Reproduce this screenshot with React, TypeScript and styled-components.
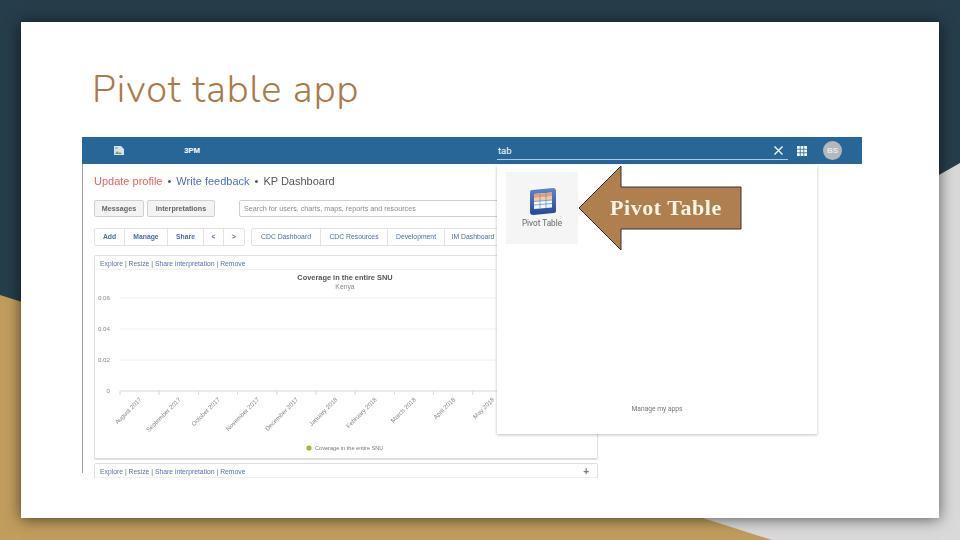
import React from "react";
import styled, { createGlobalStyle } from "styled-components";

const GlobalStyle = createGlobalStyle`
  html, body {
    margin: 0;
    padding: 0;
    background: #263d4b;
  }
  * {
    box-sizing: border-box;
  }
`;

const Slide = styled.div`
  position: relative;
  width: 960px;
  height: 540px;
  overflow: hidden;
  padding: 22px 21px;
  background: #263d4b;
`;

const Backdrop = styled.svg`
  position: absolute;
  inset: 0;
`;

const Card = styled.main`
  position: relative;
  height: 496px;
  background: #fff;
  box-shadow: 0 1px 14px rgba(0, 0, 0, 0.6);
`;

const Title = styled.h1`
  margin: 0;
  height: 115px;
  padding: 40px 0 0 71px;
  font-family: "Nunito", "Lato", sans-serif;
  font-weight: 300;
  font-size: 38px;
  line-height: 56px;
  letter-spacing: 1px;
  color: #ab7a4b;
`;

const Shot = styled.section`
  position: relative;
  width: 780px;
  height: 341px;
  margin-left: 61px;
`;

const ShotInner = styled.div`
  height: 100%;
  overflow: hidden;
  font-family: "Liberation Sans", Arial, sans-serif;
  filter: blur(0.45px);
`;

const Header = styled.header`
  display: flex;
  align-items: center;
  height: 27px;
  padding: 0 19px 0 32px;
  background: #276696;
  color: #fff;
`;

const AppName = styled.span`
  margin-left: 60px;
  width: 313px;
  font-size: 7.8px;
  font-weight: 700;
`;

const SearchBox = styled.div`
  display: flex;
  align-items: center;
  justify-content: space-between;
  width: 291px;
  height: 21px;
  margin-top: -3px;
  padding: 3px 5px 0 1px;
  border-bottom: 1.5px solid #a9cbe8;
  font-family: Roboto, sans-serif;
  font-size: 9.5px;
`;

const AppsIcon = styled.svg`
  margin-left: 9px;
`;

const Avatar = styled.div`
  display: flex;
  align-items: center;
  justify-content: center;
  width: 19px;
  height: 19px;
  margin-left: 16px;
  border-radius: 50%;
  background: #b4b8be;
  color: #e6e8ea;
  font-size: 8px;
  font-weight: 700;
`;

const Body = styled.div`
  position: relative;
  height: 314px;
  padding-left: 12px;
  overflow: hidden;
  &::before {
    content: "";
    position: absolute;
    top: 0;
    left: 0;
    width: 1px;
    height: 309px;
    background: #a0a0a0;
  }
`;

const ProfileLine = styled.p`
  display: flex;
  gap: 5px;
  height: 36px;
  margin: 0;
  padding-top: 10px;
  font-size: 11px;
  line-height: 14px;
  color: #555;
`;

const ProfileLink = styled.span<{ $tone: string }>`
  color: ${(p) => p.$tone};
`;

const ActionRow = styled.div`
  display: flex;
  height: 28px;
`;

const GreyButton = styled.button<{ $w: number }>`
  width: ${(p) => p.$w}px;
  height: 17px;
  margin-right: 3px;
  padding: 0;
  border: 1px solid #d0d0d0;
  border-radius: 2px;
  background: #f3f3f3;
  color: #666;
  font-family: inherit;
  font-size: 7.2px;
  font-weight: 700;
`;

const SearchField = styled.div`
  width: 320px;
  height: 17px;
  margin-left: 21px;
  padding-left: 4px;
  border: 1px solid #cfcfcf;
  border-radius: 2px;
  color: #8a8a8a;
  font-size: 7.2px;
  line-height: 15px;
  white-space: nowrap;
`;

const TabRow = styled.nav`
  display: flex;
  gap: 6px;
  height: 27px;
`;

const TabGroup = styled.div`
  display: flex;
  height: 18px;
  border: 1px solid #e2e2e2;
  border-radius: 2px;
`;

const Tab = styled.span<{ $w: number; $bold?: boolean }>`
  width: ${(p) => p.$w}px;
  border-left: 1px solid #e2e2e2;
  color: #4a69b4;
  font-size: 6.8px;
  font-weight: ${(p) => (p.$bold ? 700 : 400)};
  line-height: 16px;
  text-align: center;
  white-space: nowrap;
  &:first-child {
    border-left: 0;
  }
`;

const ChartCard = styled.article`
  width: 504px;
  height: 205px;
  margin-bottom: 3px;
  border: 1px solid #e0e0e0;
  border-bottom-width: 2px;
  border-radius: 2px;
`;

const CutCard = styled(ChartCard)`
  height: 30px;
`;

const LinkBar = styled.div`
  display: flex;
  justify-content: space-between;
  height: 14px;
  padding: 1px 8px 0 5px;
  border-bottom: 1px solid #efefef;
  color: #5872b8;
  font-size: 6.8px;
  line-height: 14px;
`;

const PlusMark = styled.span`
  color: #777;
  font-size: 10px;
  font-weight: 700;
`;

const ChartSvg = styled.svg`
  display: block;
  font-family: "Liberation Sans", Arial, sans-serif;
`;

const AppMenu = styled.aside`
  position: absolute;
  top: 28px;
  left: 415px;
  display: flex;
  flex-direction: column;
  justify-content: space-between;
  width: 320px;
  height: 269px;
  padding: 7px 9px 21px;
  background: #fff;
  box-shadow: 0 1px 3px rgba(0, 0, 0, 0.25);
  font-family: Roboto, sans-serif;
`;

const AppTile = styled.div`
  display: flex;
  flex-direction: column;
  align-items: center;
  width: 72px;
  height: 72px;
  padding-top: 16px;
  background: #f5f5f5;
  color: #666;
  font-size: 8.2px;
`;

const TileLabel = styled.span`
  margin-top: 2px;
`;

const ManageLink = styled.span`
  color: #777;
  font-size: 6.7px;
  text-align: center;
`;

const Callout = styled.div`
  position: absolute;
  top: 28px;
  left: 496px;
  width: 164px;
  height: 86px;
`;

const CalloutLabel = styled.span`
  position: absolute;
  top: 30px;
  left: 32px;
  color: #fdf6ea;
  font-family: "Liberation Serif", Georgia, serif;
  font-size: 22px;
  font-weight: 700;
  line-height: 26px;
  letter-spacing: 0.55px;
  white-space: nowrap;
`;

const MONTHS = [
  "August 2017",
  "September 2017",
  "October 2017",
  "November 2017",
  "December 2017",
  "January 2018",
  "February 2018",
  "March 2018",
  "April 2018",
  "May 2018",
];

const LEVELS = [
  { label: "0.06", y: 28 },
  { label: "0.04", y: 59 },
  { label: "0.02", y: 90 },
  { label: "0", y: 121 },
];

// coords are relative to the chart area below the link bar
const CoverageChart = () => (
  <ChartSvg width="502" height="188" viewBox="0 0 502 188">
    <text x="250" y="10" textAnchor="middle" fontSize="7.4" fontWeight="700" fill="#555">
      Coverage in the entire SNU
    </text>
    <text x="250" y="19" textAnchor="middle" fontSize="6.8" fill="#888">
      Kenya
    </text>
    {LEVELS.map((l) => (
      <g key={l.label}>
        <line x1="25" x2="502" y1={l.y} y2={l.y} stroke={l.y === 121 ? "#d8d8d8" : "#f0f0f0"} />
        <text x="15" y={l.y + 2} textAnchor="end" fontSize="6.2" fill="#888">
          {l.label}
        </text>
      </g>
    ))}
    {MONTHS.map((m, i) => (
      <g key={m}>
        <line x1={25 + i * 39.2} x2={25 + i * 39.2} y1="121" y2="125" stroke="#d8d8d8" />
        <text
          transform={`translate(${47 + i * 39.2} 130) rotate(-45)`}
          textAnchor="end"
          fontSize="6.2"
          fill="#888"
        >
          {m}
        </text>
      </g>
    ))}
    <circle cx="214" cy="178" r="2.6" fill="#9bbb3c" />
    <text x="220" y="180" fontSize="5.6" fill="#777">
      Coverage in the entire SNU
    </text>
  </ChartSvg>
);

const BrokenImage = () => (
  <svg width="10" height="9" viewBox="0 0 10 9">
    <path d="M0 0h7l3 3v6H0z" fill="#d8e2ea" />
    <path d="M1 8l2-3 2 2 1-1 2 2z" fill="#6fa36b" />
    <path d="M1 1h3v2H1z" fill="#9cc0e0" />
  </svg>
);

const PivotIcon = () => (
  <svg width="27" height="28" viewBox="0 0 27 28">
    <defs>
      <linearGradient id="frame" x1="0" y1="0" x2="0" y2="1">
        <stop offset="0" stopColor="#5f86c8" />
        <stop offset="1" stopColor="#24479a" />
      </linearGradient>
    </defs>
    <path d="M3 2L24 0q3 0 3 3v20q0 2-2 2L4 27q-3 0-3-3V5q0-3 2-3z" fill="url(#frame)" />
    <path d="M5 6l18-1.500v15L5 21z" fill="#f4f7fb" />
    <path d="M5 6l18-1.500v4L5 10z" fill="#e6a271" />
    <path d="M5 10l18-1.500v3.500L5 13.500z" fill="#f3c9a6" />
    <path d="M5 13.500l18-1.500M5 17l18-1.500M11 5.500v15M17 5v15" stroke="#6f92c6" strokeWidth="0.8" fill="none" />
  </svg>
);

const App = () => {
  return (
    <>
      <GlobalStyle />
      <Slide>
        <Backdrop width="960" height="540" viewBox="0 0 960 540">
          <polygon points="960,163 0,710 960,710" fill="#d9d9d9" />
          <polygon points="0,295 772,540 0,540" fill="#c09d5d" />
        </Backdrop>
        <Card>
          <Title>Pivot table app</Title>
          <Shot>
            <ShotInner>
              <Header>
                <BrokenImage />
                <AppName>3PM</AppName>
                <SearchBox>
                  tab
                  <svg width="9" height="9" viewBox="0 0 9 9">
                    <path d="M.5.5l8 8M8.500.5l-8 8" stroke="#fff" strokeWidth="1.300" />
                  </svg>
                </SearchBox>
                <AppsIcon width="10" height="10" viewBox="0 0 10 10" fill="#fff">
                  {[0, 3.6, 7.2].flatMap((y) =>
                    [0, 3.6, 7.2].map((x) => <rect key={`${x}-${y}`} x={x} y={y} width="2.8" height="2.8" />)
                  )}
                </AppsIcon>
                <Avatar>BS</Avatar>
              </Header>
              <Body>
                <ProfileLine>
                  <ProfileLink $tone="#e8625f">Update profile</ProfileLink>•
                  <ProfileLink $tone="#4f6fc0">Write feedback</ProfileLink>•
                  <span>KP Dashboard</span>
                </ProfileLine>
                <ActionRow>
                  <GreyButton $w={50}>Messages</GreyButton>
                  <GreyButton $w={68}>Interpretations</GreyButton>
                  <SearchField>Search for users, charts, maps, reports and resources</SearchField>
                </ActionRow>
                <TabRow>
                  <TabGroup>
                    <Tab $w={29} $bold>Add</Tab>
                    <Tab $w={43} $bold>Manage</Tab>
                    <Tab $w={36} $bold>Share</Tab>
                    <Tab $w={20} $bold>&lt;</Tab>
                    <Tab $w={21} $bold>&gt;</Tab>
                  </TabGroup>
                  <TabGroup>
                    <Tab $w={68}>CDC Dashboard</Tab>
                    <Tab $w={67}>CDC Resources</Tab>
                    <Tab $w={57}>Development</Tab>
                    <Tab $w={57}>IM Dashboard</Tab>
                  </TabGroup>
                </TabRow>
                <ChartCard>
                  <LinkBar>Explore | Resize | Share interpretation | Remove</LinkBar>
                  <CoverageChart />
                </ChartCard>
                <CutCard>
                  <LinkBar>
                    Explore | Resize | Share interpretation | Remove
                    <PlusMark>+</PlusMark>
                  </LinkBar>
                </CutCard>
              </Body>
              <AppMenu>
                <AppTile>
                  <PivotIcon />
                  <TileLabel>Pivot Table</TileLabel>
                </AppTile>
                <ManageLink>Manage my apps</ManageLink>
              </AppMenu>
            </ShotInner>
            <Callout>
              <svg width="164" height="86" viewBox="0 0 164 86">
                <polygon
                  points="1,43 43,1 43,22 163,22 163,64 43,64 43,85"
                  fill="#b07f50"
                  stroke="#3a3330"
                  strokeWidth="1"
                />
              </svg>
              <CalloutLabel>Pivot Table</CalloutLabel>
            </Callout>
          </Shot>
        </Card>
      </Slide>
    </>
  );
};

export default App;
